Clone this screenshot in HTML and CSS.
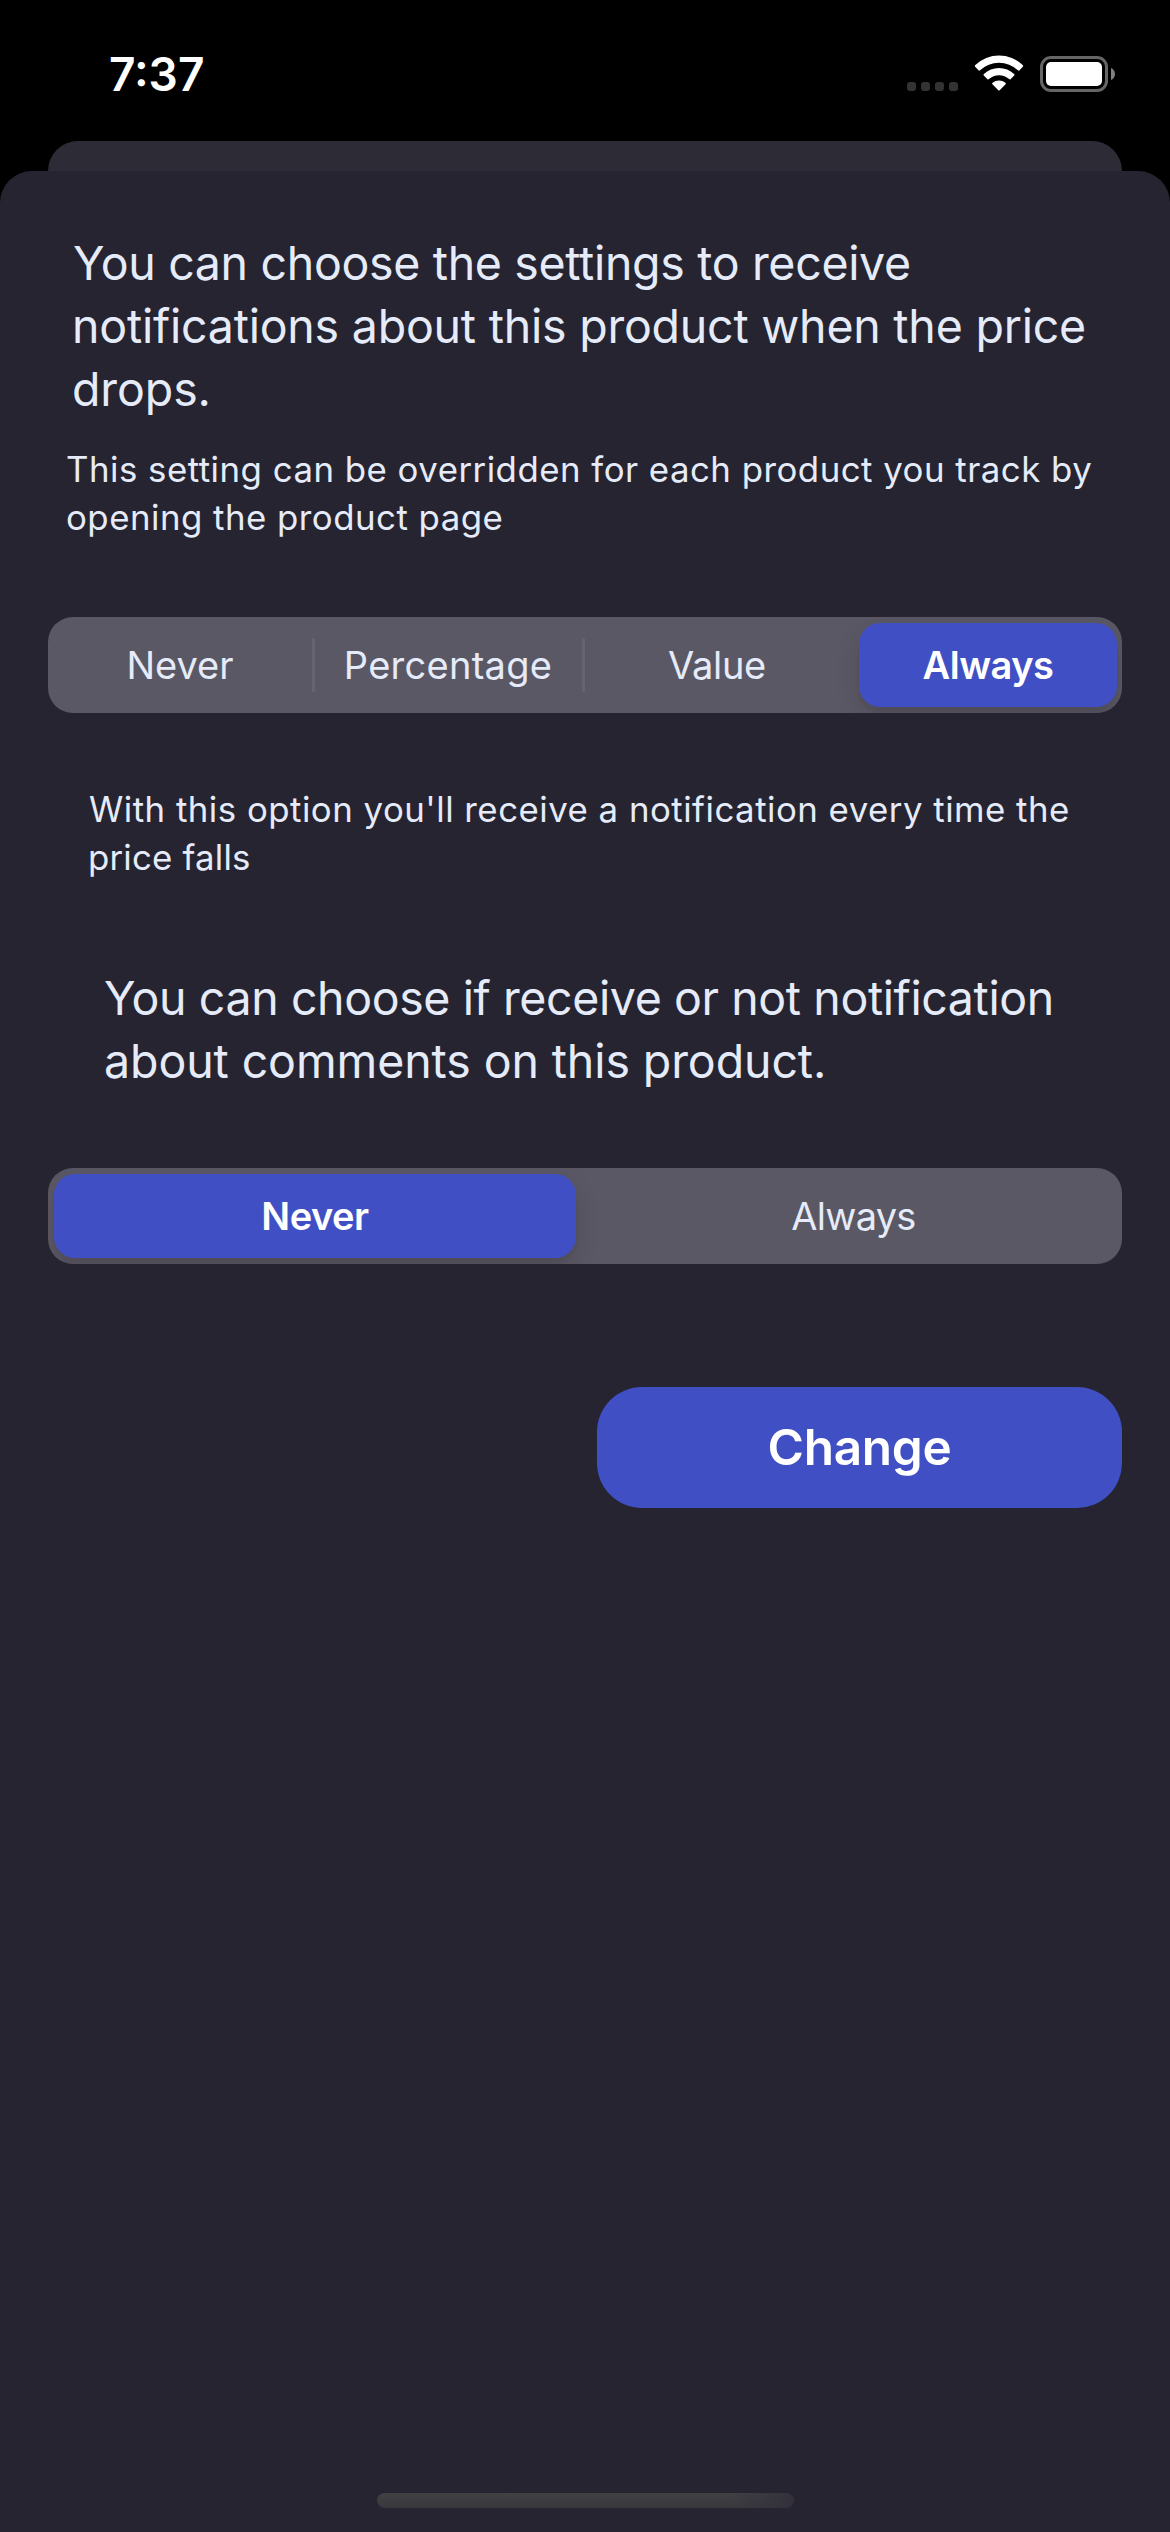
FILE: index.html
```html
<!DOCTYPE html>
<html lang="en">
<head>
<meta charset="utf-8">
<title>Notification settings</title>
<link rel="stylesheet" href="styles.css">
</head>
<body>
<header class="status">
  <time class="clock">7:37</time>
  <div class="indicators">
    <span class="signal"><i></i><i></i><i></i><i></i></span>
    <svg class="wifi" width="50" height="38" viewBox="0 0 50 38">
      <path fill="#fff" d="M1.2 11.7Q.4 10.9 1.3 10.1A34 34 0 0 1 48.7 10.1Q49.6 10.9 48.8 11.7L45.3 15.4Q44.7 16 43.9 15.3A27.5 27.5 0 0 0 6.1 15.3Q5.3 16 4.7 15.4Z"/>
      <path fill="#fff" d="M9.8 20.6Q9 19.8 9.9 19A22 22 0 0 1 40.1 19Q41 19.8 40.2 20.6L36.500 24.200Q35.900 24.800 35.100 24.100A15 15 0 0 0 14.900 24.100Q14.100 24.800 13.500 24.200Z"/>
      <path fill="#fff" d="M18.400 29.300Q17.700 28.500 18.600 27.800A10.500 10.500 0 0 1 31.400 27.800Q32.300 28.500 31.600 29.300L25.700 35.200Q25 35.900 24.300 35.200Z"/>
    </svg>
    <svg class="battery" width="76" height="36" viewBox="0 0 76 36">
      <rect x="1.500" y="1.500" width="65" height="33" rx="9.500" fill="none" stroke="#666" stroke-width="3"/>
      <rect x="6" y="6" width="56" height="24" rx="5" fill="#fff"/>
      <path d="M71 12C76.300 14.200 76.300 21.800 71 24Z" fill="#808080"/>
    </svg>
  </div>
</header>
<div class="back-card"></div>
<main class="sheet">
  <p class="lead price"><span class="l1">You can choose the settings to receive</span><span class="l2">notifications about this product when the price</span><span class="l5">drops.</span></p>
  <p class="note override"><span>This setting can be overridden for each product you track by</span><span>opening the product page</span></p>
  <div class="segments four">
    <div class="seg">Never</div>
    <div class="seg ruled wide">Percentage</div>
    <div class="seg ruled value">Value</div>
    <div class="seg on">Always</div>
  </div>
  <p class="note option"><span>With this option you'll receive a notification every time the</span><span class="l6">price falls</span></p>
  <p class="lead comments"><span class="l3">You can choose if receive or not notification</span><span class="l4">about comments on this product.</span></p>
  <div class="segments two">
    <div class="seg on">Never</div>
    <div class="seg tight">Always</div>
  </div>
  <button class="change">Change</button>
  <div class="home"></div>
</main>
</body>
</html>
```
FILE: styles.css
```css
* { box-sizing: border-box; }
body {
  margin: 0;
  width: 1170px;
  height: 2532px;
  background: #000;
  color: #e5ebf9;
  font-family: Inter, "Liberation Sans", sans-serif;
  display: flex;
  flex-direction: column;
  overflow: hidden;
}
.status {
  height: 141px;
  padding: 44px 54px 0 109px;
  display: flex;
  justify-content: space-between;
  align-items: flex-start;
}
.clock { color: #fff; font-size: 46px; font-weight: 600; line-height: 60px; }
.indicators { display: flex; padding-top: 11px; }
.signal { display: flex; gap: 5px; padding-top: 27px; }
.signal i { width: 9px; height: 9px; border-radius: 3px; background: #333; }
.wifi { margin-left: 16px; }
.battery { margin: 1px 0 0 16px; }
.back-card {
  height: 60px;
  margin: 0 48px -30px;
  flex: none;
  border-radius: 30px 30px 0 0;
  background: #2d2b35;
}
.sheet {
  position: relative;
  flex: 1;
  display: flex;
  flex-direction: column;
  padding: 61px 48px 24px;
  border-radius: 32px 32px 0 0;
  background: #262431;
}
p { margin: 0; white-space: nowrap; }
p span { display: block; }
.lead { font-size: 46.5px; line-height: 63px; }
.note { font-size: 34.8px; line-height: 48px; letter-spacing: 0.49px; }
.price { padding-left: 25px; }
.override { margin-top: 24px; padding-left: 18px; }
.option { margin-top: 72px; padding-left: 41px; }
.comments { margin-top: 86px; padding-left: 56px; }
.l1 { letter-spacing: -0.328px; }
.l2 { letter-spacing: -0.223px; margin-left: -1px; }
.l3 { letter-spacing: -0.4px; }
.l4 { letter-spacing: -0.1px; }
.l5 { letter-spacing: -0.1px; margin-left: -1px; }
.l6 { letter-spacing: 0.2px; margin-left: -1px; }
.segments {
  display: grid;
  height: 96px;
  padding: 6px 0;
  border-radius: 25px;
  background: #5b5865;
  overflow: hidden;
  font-size: 38px;
}
.four { grid-template-columns: 264px 270px 270px 258px; margin-top: 76px; }
.four .on { margin: 0 -7px 0 7px; }
.two { grid-template-columns: 522px 1fr; gap: 9px; padding-left: 6px; margin-top: 75px; }
.seg { display: flex; align-items: center; justify-content: center; position: relative; }
.ruled { padding-left: 2px; }
.ruled::before {
  content: "";
  position: absolute;
  left: 0;
  top: 15px;
  width: 3px;
  height: 54px;
  border-radius: 2px;
  background: #676471;
}
.value { letter-spacing: -0.3px; padding-left: 0; }
.wide { letter-spacing: 0.28px; }
.tight { letter-spacing: -0.73px; }
.on {
  color: #fff;
  font-weight: 600;
  letter-spacing: -0.5px;
  border-radius: 21px;
  background: #4050c4;
  box-shadow: 0 9px 24px rgba(0,0,0,.12), 0 6px 3px rgba(0,0,0,.04);
}
.change {
  align-self: flex-end;
  width: 525px;
  height: 121px;
  margin-top: 123px;
  padding: 0;
  border: 0;
  border-radius: 45px;
  background: #4050c4;
  color: #fff;
  font: 600 49.5px/121px Inter, "Liberation Sans", sans-serif;
  letter-spacing: -0.29px;
}
.home {
  align-self: center;
  width: 417px;
  height: 15px;
  margin-top: auto;
  border-radius: 8px;
  background: linear-gradient(90deg, transparent 85%, #33303c 100%), linear-gradient(#414043, #39383d);
}
```
